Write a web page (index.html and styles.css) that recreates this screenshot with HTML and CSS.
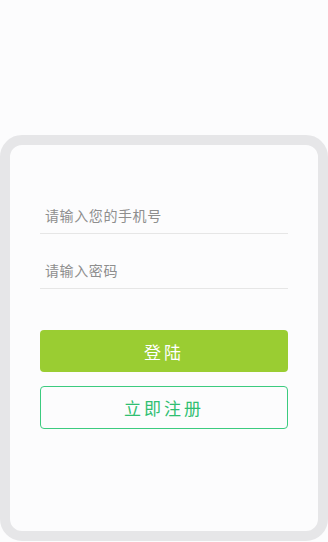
FILE: index.html
```html
<!DOCTYPE html>
<html lang="zh">
<head>
<meta charset="utf-8">
<title>登陆</title>
<link rel="stylesheet" href="styles.css">
</head>
<body>
<div class="card">
  <div class="form">
    <input class="field" type="text" placeholder="请输入您的手机号">
    <input class="field field-second" type="password" placeholder="请输入密码">
    <button class="btn btn-login" type="button">登陆</button>
    <button class="btn btn-register" type="button">立即注册</button>
  </div>
</div>
</body>
</html>
```

FILE: styles.css
```css
html, body {
  margin: 0;
  padding: 0;
  background: #fcfcfd;
  font-family: "Noto Sans CJK SC", "Noto Sans", sans-serif;
}
body {
  width: 328px;
  height: 542px;
  overflow: hidden;
}
.card {
  box-sizing: border-box;
  margin-top: 135px;
  width: 328px;
  height: 406px;
  border: 10px solid #e6e6e8;
  border-radius: 22px;
  background: #fcfcfd;
}
.form {
  display: flex;
  flex-direction: column;
  padding: 52px 30px 0;
}
.field {
  box-sizing: border-box;
  height: 37px;
  border: none;
  border-bottom: 1px solid #e6e6e6;
  background: transparent;
  padding: 0 5px;
  font-family: inherit;
  font-size: 14px;
  letter-spacing: 0.6px;
  color: #333;
  outline: none;
}
.field::placeholder {
  color: #8e8e8e;
}
.field-second {
  margin-top: 18px;
}
.btn {
  box-sizing: border-box;
  font-family: inherit;
  font-size: 17px;
  letter-spacing: 3px;
  border-radius: 4px;
  padding: 0;
  cursor: pointer;
}
.btn-login {
  margin-top: 41px;
  height: 42px;
  border: none;
  background: #9acd32;
  color: #ffffff;
}
.btn-register {
  margin-top: 14px;
  height: 43px;
  border: 1px solid #3ccb7f;
  background: #fcfcfd;
  color: #2fbf71;
}
```
